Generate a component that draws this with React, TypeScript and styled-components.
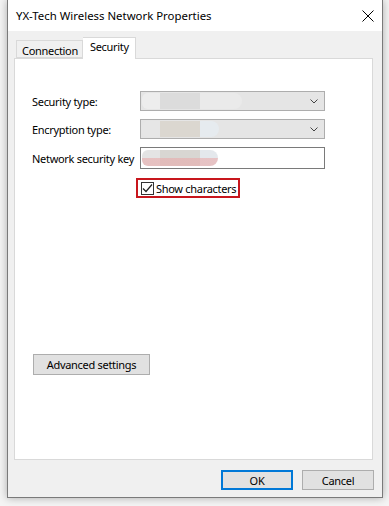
import styled, { createGlobalStyle } from 'styled-components';

const GlobalStyle = createGlobalStyle`
  html, body {
    margin: 0;
    padding: 0;
    background: #f4f4f4;
  }
  body {
    font-family: "Noto Sans", "Open Sans", sans-serif;
    font-size: 11px;
    letter-spacing: -0.3px;
    color: #000;
  }
`;

const Page = styled.div`
  width: 389px;
  height: 506px;
  padding-left: 7px;
  box-sizing: border-box;
`;

const Window = styled.div`
  width: 376px;
  height: 498px;
  box-sizing: border-box;
  border: 1px solid #7a7a7a;
  border-top: none;
  background: #f0f0f0;
  box-shadow: 0 0 8px rgba(0, 0, 0, 0.3);
  display: flex;
  flex-direction: column;
`;

const TitleBar = styled.div`
  height: 31px;
  background: #fff;
  display: flex;
  align-items: center;
  justify-content: space-between;
  padding: 0 8px 0 8px;
  box-sizing: border-box;
`;

const Title = styled.span`
  font-size: 11.4px;
  letter-spacing: 0;
`;

const CloseIcon = () => (
  <svg width="12" height="12" viewBox="0 0 12 12">
    <path d="M0.5 0.5 L11.5 11.5 M11.5 0.5 L0.5 11.5" stroke="#000" strokeWidth="1" />
  </svg>
);

const Body = styled.div`
  flex: 1;
  padding: 6px 9px 0 6px;
  display: flex;
  flex-direction: column;
`;

const TabRow = styled.div`
  display: flex;
  align-items: flex-end;
  padding-left: 2px;
  height: 21px;
`;

const Tab = styled.div<{ active?: boolean }>`
  box-sizing: border-box;
  height: ${({ active }) => (active ? '22px' : '18px')};
  padding: ${({ active }) => (active ? '1px 6px 0 7px' : '2px 4px 0 5px')};
  background: ${({ active }) => (active ? '#fff' : '#f0f0f0')};
  border: 1px solid #d9d9d9;
  border-bottom: ${({ active }) => (active ? 'none' : '1px solid #d9d9d9')};
  margin-bottom: ${({ active }) => (active ? '-1px' : '0')};
  ${({ active }) => (active ? 'border-left: none;' : '')}
  position: relative;
  z-index: ${({ active }) => (active ? 1 : 0)};
  line-height: 15px;
`;

const Panel = styled.div`
  height: 402px;
  box-sizing: border-box;
  background: #fff;
  border: 1px solid #d9d9d9;
  padding: 32px 0 0 17px;
  display: flex;
  flex-direction: column;
`;

const FormGrid = styled.div`
  display: grid;
  grid-template-columns: 108px 185px;
  row-gap: 8px;
  align-items: center;
`;

const Label = styled.span`
  white-space: nowrap;
`;

const Combo = styled.div`
  height: 20px;
  box-sizing: border-box;
  background: #e5e5e5;
  border: 1px solid #adadad;
  display: flex;
  align-items: center;
  justify-content: space-between;
  padding: 0 6px 0 1px;
`;

const KeyInput = styled.div`
  height: 22px;
  box-sizing: border-box;
  background: #fff;
  border: 1px solid #7a7a7a;
  display: flex;
  align-items: center;
  padding-left: 1px;
`;

const Blur = styled.div<{ w: number; tone: 'gray' | 'beige' | 'pink' }>`
  width: ${({ w }) => w}px;
  height: 16px;
  border-radius: 6px 8px 8px 6px;
  background: ${({ tone }) =>
    tone === 'gray'
      ? 'linear-gradient(90deg, #ededed 0 18px, #dcdcdc 18px 58px, #eaeaea 58px)'
      : tone === 'beige'
      ? 'linear-gradient(90deg, #e6e6e6 0 18px, #dbd7d0 18px 58px, #e6ebef 58px)'
      : 'linear-gradient(180deg, transparent 0 8px, rgba(232,170,170,0.6) 8px), linear-gradient(90deg, #e4e4e4 0 18px, #d8d6d2 18px 58px, #e4e8ec 58px)'};
`;

const Chevron = () => (
  <svg width="8" height="5" viewBox="0 0 8 5">
    <path d="M0.5 0.5 L4 4 L7.5 0.5" stroke="#444" strokeWidth="1" fill="none" />
  </svg>
);

const CheckRow = styled.div`
  margin: 9px 0 0 104px;
  display: flex;
`;

const FocusBox = styled.div`
  display: flex;
  align-items: center;
  gap: 2px;
  height: 20px;
  box-sizing: border-box;
  border: 2px solid #c8161d;
  padding: 0 2px 0 3px;
`;

const Box = styled.div`
  width: 13px;
  height: 13px;
  box-sizing: border-box;
  border: 1px solid #333;
  background: #fff;
  display: flex;
  align-items: center;
  justify-content: center;
`;

const CheckMark = () => (
  <svg width="11" height="11" viewBox="0 0 11 11">
    <path d="M1 5.5 L4 8.5 L10 1.5" stroke="#222" strokeWidth="1.2" fill="none" />
  </svg>
);

const Spacer = styled.div`
  flex: 1;
`;

const Button = styled.button<{ primary?: boolean }>`
  font-family: inherit;
  font-size: 11px;
  letter-spacing: -0.3px;
  color: #000;
  height: 21px;
  box-sizing: border-box;
  background: #e1e1e1;
  border: ${({ primary }) => (primary ? '2px solid #0078d7' : '1px solid #adadad')};
  padding: 0;
  margin: 0;
  line-height: 1;
`;

const AdvancedButton = styled(Button)`
  width: 117px;
  margin-bottom: 84px;
  margin-left: 1px;
`;

const Footer = styled.div`
  height: 37px;
  display: flex;
  justify-content: flex-end;
  align-items: flex-start;
  gap: 9px;
  padding: 10px 8px 0 0;
  box-sizing: border-box;
`;

const DialogButton = styled(Button)`
  width: 72px;
  height: 20px;
`;

export default function App() {
  return (
    <>
      <GlobalStyle />
      <Page>
        <Window>
          <TitleBar>
            <Title>YX-Tech Wireless Network Properties</Title>
            <CloseIcon />
          </TitleBar>
          <Body>
            <TabRow>
              <Tab>Connection</Tab>
              <Tab active>Security</Tab>
            </TabRow>
            <Panel>
              <FormGrid>
                <Label>Security type:</Label>
                <Combo>
                  <Blur w={100} tone="gray" />
                  <Chevron />
                </Combo>
                <Label>Encryption type:</Label>
                <Combo>
                  <Blur w={77} tone="beige" />
                  <Chevron />
                </Combo>
                <Label>Network security key</Label>
                <KeyInput>
                  <Blur w={76} tone="pink" />
                </KeyInput>
              </FormGrid>
              <CheckRow>
                <FocusBox>
                  <Box>
                    <CheckMark />
                  </Box>
                  <span>Show characters</span>
                </FocusBox>
              </CheckRow>
              <Spacer />
              <div>
                <AdvancedButton>Advanced settings</AdvancedButton>
              </div>
            </Panel>
          </Body>
          <Footer>
            <DialogButton primary>OK</DialogButton>
            <DialogButton>Cancel</DialogButton>
          </Footer>
        </Window>
      </Page>
    </>
  );
}
